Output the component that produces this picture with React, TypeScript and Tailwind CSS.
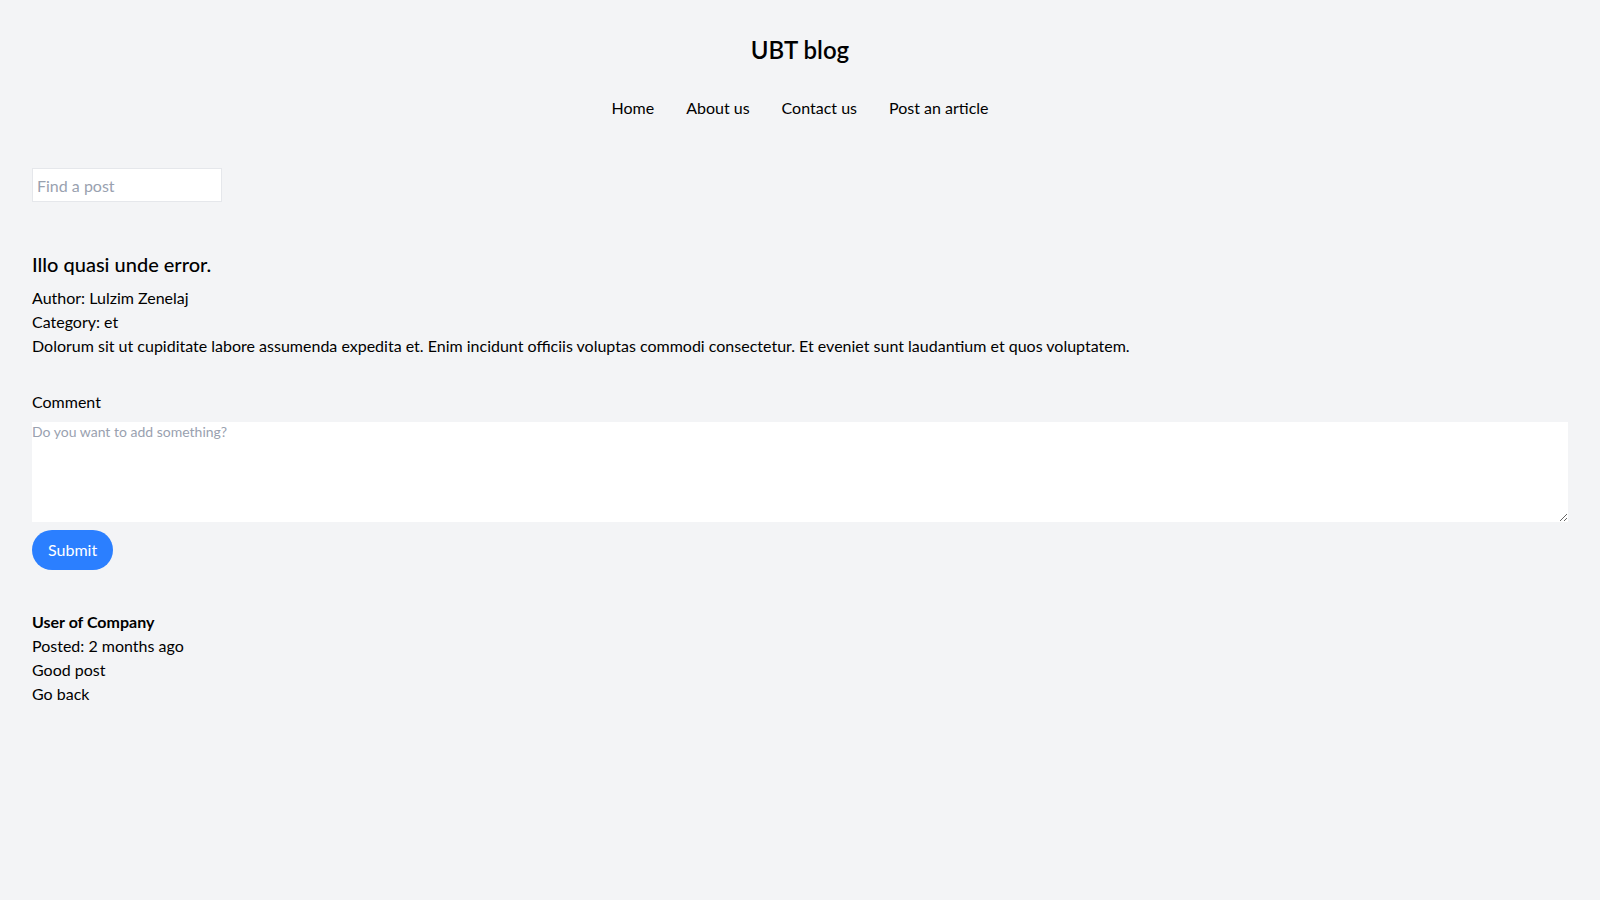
export default function App() {
  return (
    <div className="min-h-screen bg-gray-100 text-black">
      <div className="font-['Lato',sans-serif] px-8">
        <header className="pt-[34px] text-center">
          <h1 className="text-2xl font-semibold">UBT blog</h1>
          <nav className="mt-[30px] flex justify-center gap-8 text-base">
            <a href="#">Home</a>
            <a href="#">About us</a>
            <a href="#">Contact us</a>
            <a href="#">Post an article</a>
          </nav>
        </header>
        <div className="mt-12">
          <input
            type="text"
            placeholder="Find a post"
            className="w-[190px] h-[34px] border border-gray-200 bg-white px-1 text-base placeholder-gray-400 outline-none"
          />
        </div>
        <article className="mt-12">
          <h2 className="text-xl font-medium">Illo quasi unde error.</h2>
          <div className="mt-2 text-base leading-6">
            <p>Author: Lulzim Zenelaj</p>
            <p>Category: et</p>
            <p>
              Dolorum sit ut cupiditate labore assumenda expedita et. Enim incidunt officiis voluptas commodi consectetur. Et eveniet sunt laudantium et quos voluptatem.
            </p>
          </div>
        </article>
        <form className="mt-8" onSubmit={(e) => e.preventDefault()}>
          <label className="block text-base leading-6">Comment</label>
          <textarea
            placeholder="Do you want to add something?"
            className="mt-2 block h-[100px] w-full bg-white text-sm placeholder-gray-400 outline-none"
          />
          <button
            type="submit"
            className="mt-2 h-[40px] rounded-full bg-blue-500 px-4 text-base text-white"
          >
            Submit
          </button>
        </form>
        <div className="mt-10 text-base leading-6">
          <p className="font-bold">User of Company</p>
          <p>Posted: 2 months ago</p>
          <p>Good post</p>
          <a href="#" className="block">Go back</a>
        </div>
      </div>
    </div>
  );
}
